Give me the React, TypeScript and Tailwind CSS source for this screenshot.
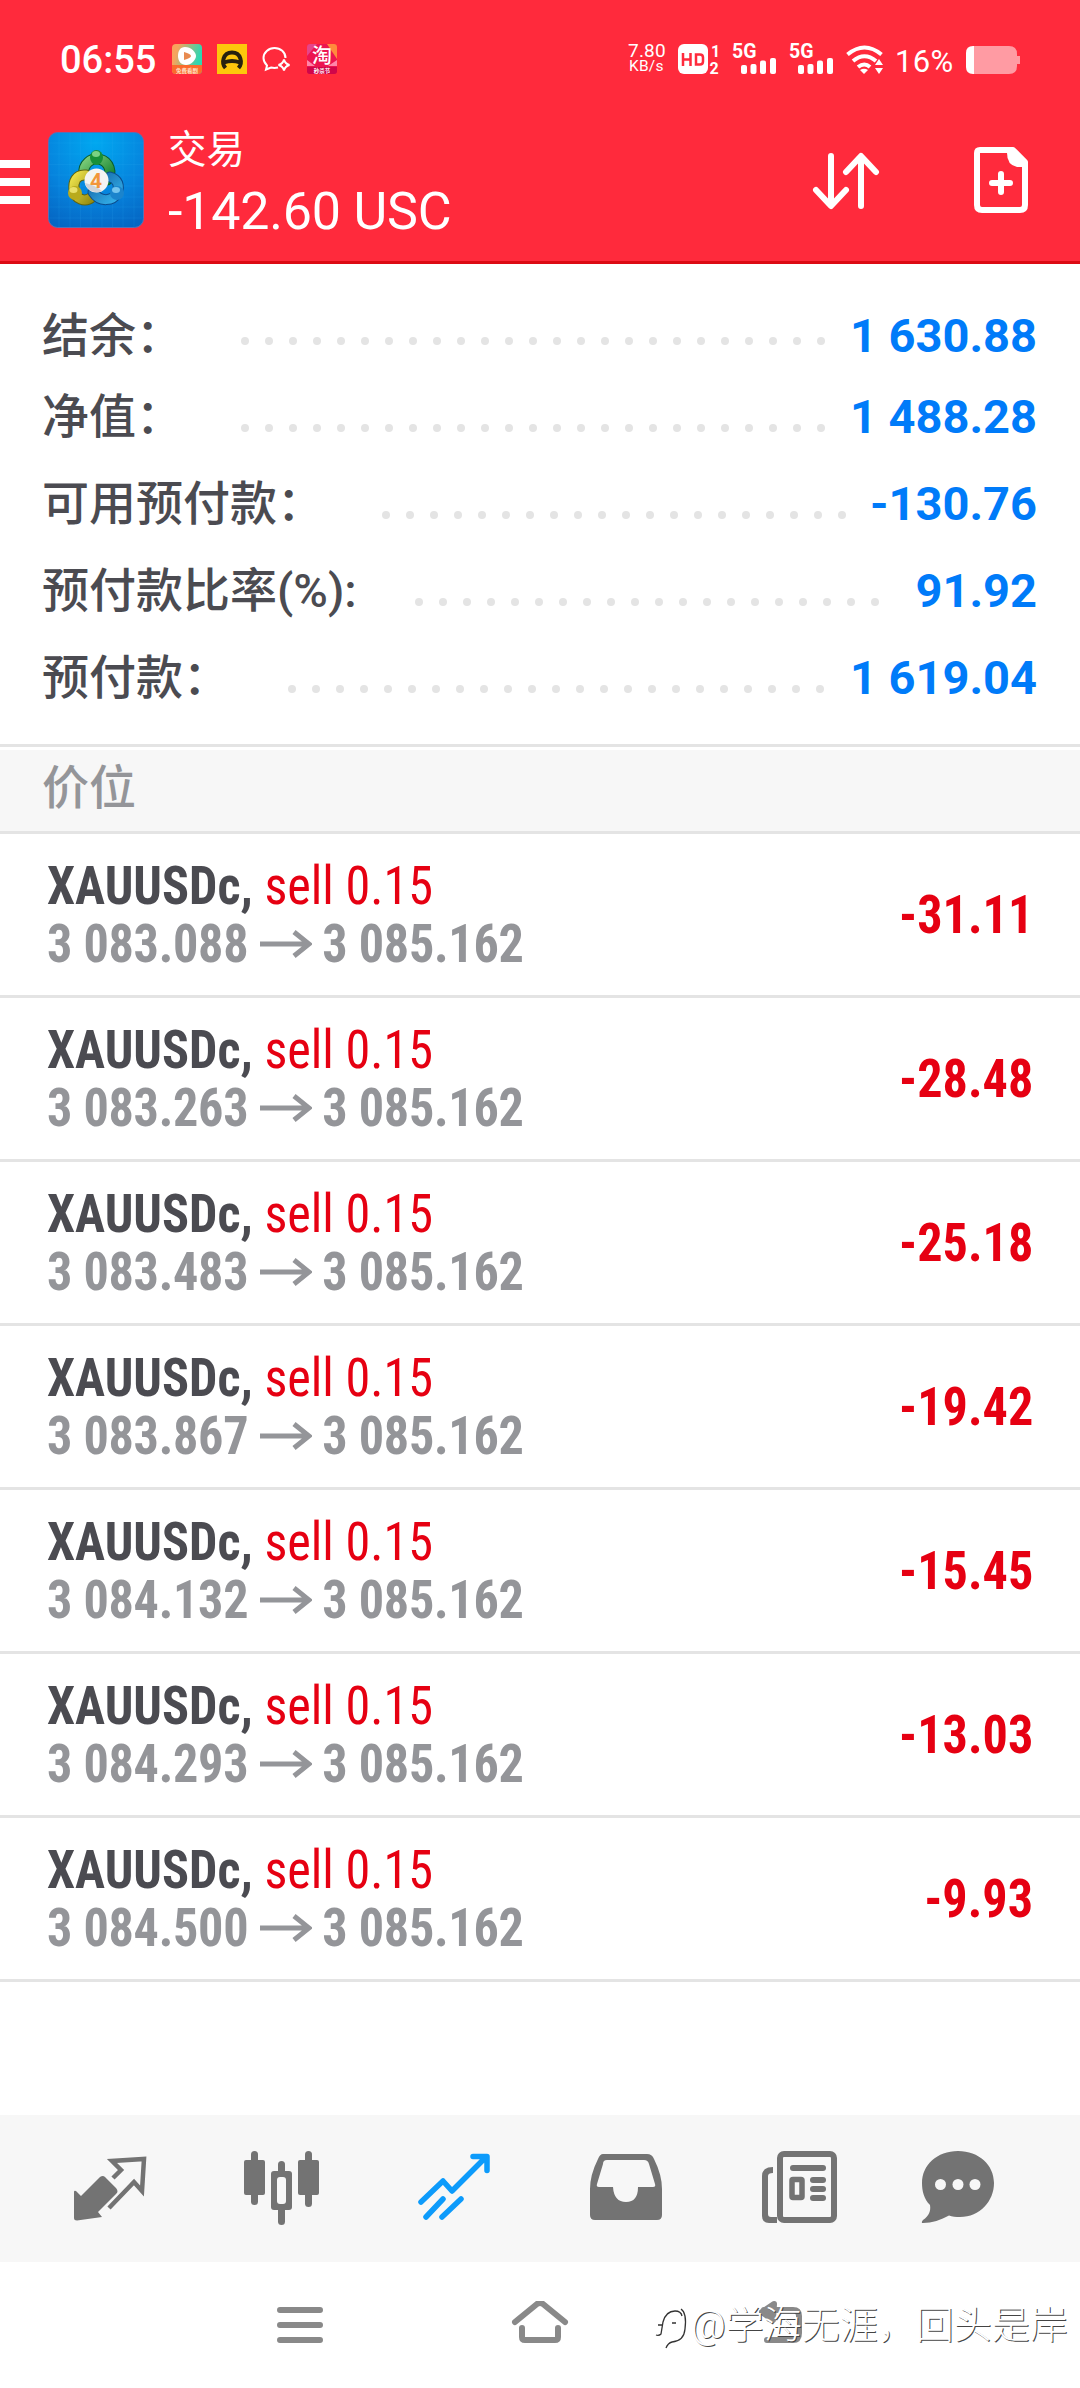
import type { ReactNode } from 'react'

const summary = [
  { label: '结余：', value: '1 630.88', dots: 25, inset: 'pr-[255px]', text: 'pt-[15px]' },
  { label: '净值：', value: '1 488.28', dots: 25, inset: 'pr-[255px]', text: 'pt-[9px]' },
  { label: '可用预付款：', value: '-130.76', dots: 20, inset: 'pr-[234px]', text: 'pt-[9px]' },
  { label: '预付款比率(%):', value: '91.92', dots: 20, inset: 'pr-[201px]', text: 'pt-[9px]' },
  { label: '预付款：', value: '1 619.04', dots: 23, inset: 'pr-[256px]', text: 'pt-[9px]' },
]

const positions = [
  { open: '3 083.088', profit: '-31.11' },
  { open: '3 083.263', profit: '-28.48' },
  { open: '3 083.483', profit: '-25.18' },
  { open: '3 083.867', profit: '-19.42' },
  { open: '3 084.132', profit: '-15.45' },
  { open: '3 084.293', profit: '-13.03' },
  { open: '3 084.500', profit: '-9.93' },
]

function Signal() {
  return (
    <div className="relative h-[30px] w-[45px] shrink-0">
      <span className="absolute left-0 top-0 text-[19.500px] font-bold leading-[16px]">5G</span>
      <svg className="absolute inset-0" width="45" height="30" fill="#fff">
        <rect x="9" y="21" width="6" height="9" rx="2" />
        <rect x="18.500" y="20" width="6" height="10" rx="2" />
        <rect x="28" y="16.500" width="6" height="13.500" rx="2" />
        <rect x="38" y="14" width="6" height="16" rx="2" />
      </svg>
    </div>
  )
}

function StatusBar() {
  return (
    <div className="flex h-[74px] items-end pl-[60px] text-white">
      <span className="w-[112px] text-[38px] font-medium leading-[28px]">06:55</span>
      <div className="flex gap-[15px]">
        <svg width="30" height="30" viewBox="0 0 30 30">
          <defs>
            <linearGradient id="video" x1="0" y1="0" x2="1" y2="0.300">
              <stop offset="0.200" stopColor="#f8a35c" />
              <stop offset="0.950" stopColor="#2fd6b0" />
            </linearGradient>
          </defs>
          <rect width="30" height="30" rx="4" fill="url(#video)" />
          <path d="M0 21h30v5a4 4 0 0 1-4 4H4a4 4 0 0 1-4-4z" fill="#fb6a2c" />
          <path d="M13 3c6 0 11 5 11 9s-5 9-10 9-8-4-8-9 2-9 7-9z" fill="#fff" />
          <path d="M12 8q7 2 7 4t-7 4z" fill="#e88a50" />
          <text x="15" y="28.500" textAnchor="middle" fontSize="5.500" fontWeight="700" fill="#ffe0c8">免费看剧</text>
        </svg>
        <svg width="30" height="30" viewBox="0 0 30 30">
          <rect width="30" height="30" fill="#fdc70c" />
          <path d="M8.500 24C4 19 6 8.500 15 8.500S26 19 21.500 24M7 18.500c5-2 11-2 16 0" fill="none" stroke="#26220f" strokeWidth="4" />
        </svg>
        <svg width="30" height="30" viewBox="0 0 30 30" fill="none" stroke="#fff" strokeWidth="2">
          <path d="M23.500 14c0-6-5-10-11-10S1.500 8.500 1.500 14c0 3.500 1.500 5.500 3.500 7.500L4 25.500l5-2c3 .8 5 .5 7 0" />
          <path d="M22 15.500c.8 3.500 2 4.700 5.500 5.500-3.500.8-4.700 2-5.500 5.500-.8-3.500-2-4.700-5.500-5.500 3.500-.8 4.700-2 5.500-5.500z" />
        </svg>
        <svg width="30" height="30" viewBox="0 0 30 30">
          <rect width="30" height="30" rx="3" fill="#ec1550" />
          <path d="M0 3q0-3 3-3h7L0 12z" fill="#e6448a" />
          <path d="M20 0h7q3 0 3 3v12z" fill="#ff8a3c" />
          <path d="M0 16l8 6H0zM30 16l-9 6h9z" fill="#ff86a8" />
          <text x="15" y="18.500" textAnchor="middle" fontSize="20" fontWeight="500" fill="#fff">淘</text>
          <path d="M0 23h30v4a3 3 0 0 1-3 3H3a3 3 0 0 1-3-3z" fill="#d0064a" />
          <text x="15" y="28.800" textAnchor="middle" fontSize="5.500" fontWeight="700" fill="#fff">秒杀节</text>
        </svg>
      </div>
      <div className="ml-[291px] flex h-[32px] w-[50px] flex-col">
        <span className="text-[19px] leading-[17px] tracking-[0.2px]">7.80</span>
        <span className="pl-px text-[15.500px] leading-[15px] tracking-[0.2px]">KB/s</span>
      </div>
      <svg className="mr-[11px] overflow-visible" width="43" height="30" viewBox="0 0 43 30" fill="#fff">
        <rect width="30" height="30" rx="6" />
        <path d="M5 9v13M12.500 9v13M5 15.500h7.500M18 10.500h4q3 0 3 3v4q0 3-3 3h-4z" fill="none" stroke="#ff2a3c" strokeWidth="2.500" />
        <text x="33" y="12.500" fontSize="16" fontWeight="700">1</text>
        <text x="31.500" y="29.500" fontSize="16" fontWeight="700">2</text>
      </svg>
      <Signal />
      <div className="w-3" />
      <Signal />
      <svg className="ml-3" width="38" height="30" viewBox="0 0 38 30" fill="none" stroke="#fff" strokeWidth="4">
        <path d="M1.500 10.500q17-14 34 0M7 17q11.500-9.500 23 0M12 23q6.500-5 12 0" />
        <path d="M18 30l-4-4q4-2.500 8 0zM33 15l4 6h-8zM33 30l4-6h-8z" fill="#fff" stroke="none" />
      </svg>
      <span className="ml-[11px] w-[71px] text-[31px] leading-[25px] tracking-[0.3px]">16%</span>
      <svg width="55" height="28" viewBox="0 0 55 28">
        <path d="M7 0h36q8 0 8 8v2h3v8h-3v2q0 8-8 8H7z" fill="#ff9ba3" />
        <path d="M8 0v28H7q-7 0-7-7V7q0-7 7-7z" fill="#fff" />
      </svg>
    </div>
  )
}

function AppLogo() {
  return (
    <svg width="96" height="96" viewBox="0 0 96 96">
      <defs>
        <radialGradient id="sky" cx="0.500" cy="0.100" r="0.950">
          <stop offset="0" stopColor="#00a8f0" />
          <stop offset="0.600" stopColor="#0683dd" />
          <stop offset="1" stopColor="#0567c4" />
        </radialGradient>
        <linearGradient id="green" x1="0" y1="0" x2="1" y2="1">
          <stop offset="0" stopColor="#7fce7a" />
          <stop offset="1" stopColor="#0f7f2c" />
        </linearGradient>
        <linearGradient id="yellow" x1="0" y1="0" x2="1" y2="1">
          <stop offset="0" stopColor="#ebe04a" />
          <stop offset="1" stopColor="#978d12" />
        </linearGradient>
        <linearGradient id="blue" x1="0" y1="0" x2="1" y2="1">
          <stop offset="0" stopColor="#1467a8" />
          <stop offset="1" stopColor="#34b0ea" />
        </linearGradient>
      </defs>
      <rect x="0.500" y="0.500" width="95" height="95" rx="9" fill="url(#sky)" stroke="#5a6fb4" />
      <path
        d="M11 1v94M22 1v94M32.500 1v94M43 1v94M54 1v94M64.500 1v94M75 1v94M86 1v94M1 11h94M1 22h94M1 32.500h94M1 43h94M1 54h94M1 65h94M1 75h94M1 86h94"
        stroke="#3db2f5"
        strokeOpacity="0.120"
      />
      <g fill="none" strokeLinecap="round">
        <path d="M36 42a13 13 0 1 1 23 6" stroke="#0a5c2c" strokeWidth="11" />
        <path d="M36 42a13 13 0 1 1 23 6" stroke="url(#green)" strokeWidth="9" />
        <path d="M38 43c-10-1-13 7-12 15 1 9 11 13 18 7" stroke="#5f6410" strokeWidth="11" />
        <path d="M38 43c-10-1-13 7-12 15 1 9 11 13 18 7" stroke="url(#yellow)" strokeWidth="9" />
        <path d="M62 45c8 2 10 9 7 16-4 8-17 10-24-1" stroke="#0b4c8c" strokeWidth="11" />
        <path d="M62 45c8 2 10 9 7 16-4 8-17 10-24-1" stroke="url(#blue)" strokeWidth="9" />
      </g>
      <ellipse cx="48.500" cy="25.500" rx="6.500" ry="7.500" fill="#179037" />
      <ellipse cx="48" cy="22" rx="4" ry="3" fill="#7ad283" />
      <ellipse cx="27" cy="61" rx="7" ry="7" fill="#b9ab1c" />
      <ellipse cx="25.500" cy="58" rx="4" ry="3" fill="#e9e06a" />
      <ellipse cx="69" cy="61" rx="7" ry="7" fill="#1b84cc" />
      <ellipse cx="68" cy="58" rx="4" ry="3" fill="#74c4ee" />
      <circle cx="48.500" cy="48.500" r="12" fill="#f4f4f2" />
      <path d="M37 51q10 2 17 8a12 12 0 0 1-17-8z" fill="#cfd3d8" />
      <text x="48" y="55.500" textAnchor="middle" fontSize="21" fontWeight="700" fill="#f2963a">4</text>
    </svg>
  )
}

function Header() {
  return (
    <header className="h-[264px] border-b-[3px] border-[#dc0a14] bg-[#ff2a3c]">
      <StatusBar />
      <div className="flex pt-[52px] text-white">
        <div className="mt-[34px] flex w-[30px] flex-col gap-[10px]">
          <div className="h-2 bg-white" />
          <div className="h-2 bg-white" />
          <div className="h-2 bg-white" />
        </div>
        <div className="ml-[18px] mt-[6px]">
          <AppLogo />
        </div>
        <div className="ml-[24px] flex w-[400px] flex-col pt-[2px]">
          <h1 className="text-[38.500px] leading-[44px]">交易</h1>
          <span className="mt-[10px] whitespace-nowrap text-[52px] leading-[60px] tracking-[-0.2px]">-142.60 USC</span>
        </div>
        <div className="ml-[241px] mt-[21px] flex items-start gap-[93px]">
          <svg className="mt-[5px]" width="72" height="60" viewBox="0 0 72 60" fill="none" stroke="#fff" strokeWidth="6" strokeLinecap="round" strokeLinejoin="round">
            <path d="M22 4v49M7 38l15 16 15-16M52 54V5M37 20L52 4l15 16" />
          </svg>
          <svg width="54" height="66" viewBox="0 0 54 66" fill="none" stroke="#fff">
            <path d="M6 3h33l12 12v43q0 5-5 5H8q-5 0-5-5V6q0-3 3-3z" strokeWidth="6" strokeLinejoin="round" />
            <path d="M33 3h7l12 12v5h-9q-10-2-10-14z" fill="#fff" stroke="none" />
            <path d="M27 27v18M18 36h18" strokeWidth="6" strokeLinecap="round" />
          </svg>
        </div>
      </div>
    </header>
  )
}

function Dots({ count }: { count: number }) {
  return (
    <div className="flex gap-4">
      {Array.from({ length: count }, (_, i) => (
        <i key={i} className="size-2 rounded-full bg-[#e4e4e4]" />
      ))}
    </div>
  )
}

function Summary() {
  return (
    <section className="h-[480px] pt-[27px]">
      {summary.map((row) => (
        <div key={row.label} className="grid h-[87px] grid-cols-1 grid-rows-1">
          <div className={`col-start-1 row-start-1 flex justify-end pt-[46px] ${row.inset}`}>
            <Dots count={row.dots} />
          </div>
          <div className={`col-start-1 row-start-1 flex justify-between pl-[42px] pr-[43px] text-[47px] leading-[60px] ${row.text}`}>
            <span className="font-medium text-[#4b4b51]">{row.label}</span>
            <span className="font-bold text-[#007bf9]">{row.value}</span>
          </div>
        </div>
      ))}
    </section>
  )
}

function Position({ open, profit }: { open: string; profit: string }) {
  return (
    <div className="flex h-[164px] items-center justify-between whitespace-nowrap border-b-[3px] border-[#e4e4e4] px-[47px] font-['Roboto_Condensed','Roboto'] text-[54px] leading-[58px] [font-stretch:75%]">
      <div className="flex origin-left scale-x-[0.93] flex-col">
        <div>
          <b className="text-[#4b4b51]">XAUUSDc,</b> <span className="text-[#e60012]">sell 0.15</span>
        </div>
        <div className="flex items-center font-bold tracking-[-0.3px] text-[#949599]">
          <span className="w-[229px]">{open}</span>
          <svg className="mr-[11px]" width="56" height="28" viewBox="0 0 52 28" preserveAspectRatio="none" fill="none" stroke="#949599" strokeWidth="5">
            <path d="M0 14h48M34 2l15 12-15 12" />
          </svg>
          <span>3 085.162</span>
        </div>
      </div>
      <span className="origin-right scale-x-[0.93] font-bold text-[#e60012]">{profit}</span>
    </div>
  )
}

function TabIcon({ children, active }: { children: ReactNode; active?: boolean }) {
  return (
    <svg
      className={active ? 'text-[#0d9bfb]' : 'text-[#737373]'}
      width="96"
      height="84"
      viewBox="0 0 96 84"
      fill="currentColor"
    >
      {children}
    </svg>
  )
}

function TabBar() {
  return (
    <nav className="flex h-[147px] items-start gap-[76px] bg-[#f7f7f7] pl-[60px] pt-[31px]">
      <TabIcon>
        <path d="M14 46v26q0 2.500 3 2.500L42 71l-4-5 18-18q3-2.500 0-6L45 31q-2-2-5 0L21 50l-5-5q-2-1-2 1z" />
        <path
          d="M53 32l8-8-9-9 32-2-2 32-8-9-25 26"
          fill="none"
          stroke="currentColor"
          strokeWidth="4.500"
        />
      </TabIcon>
      <TabIcon>
        <rect x="12" y="14" width="21" height="35" rx="2" />
        <rect x="19" y="5" width="7" height="54" rx="3.500" />
        <rect x="66" y="14" width="21" height="35" rx="2" />
        <rect x="73" y="5" width="7" height="56" rx="3.500" />
        <rect x="46" y="15" width="7" height="64" rx="3.500" />
        <rect x="39" y="25" width="21" height="39" rx="3" />
        <rect x="45" y="31" width="9" height="27" rx="3" fill="#f7f7f7" />
      </TabIcon>
      <TabIcon active>
        <path
          d="M17 56l22-21 9 10 34-34M69 10.500h14v14M22 71l17-18M38 71l19-18"
          fill="none"
          stroke="currentColor"
          strokeWidth="5.500"
          strokeLinecap="round"
          strokeLinejoin="round"
        />
      </TabIcon>
      <TabIcon>
        <path d="M27 8h44q5 0 7 5 8 16 8 30v26q0 5-5 5H19q-5 0-5-5V43q0-14 8-30 2-5 5-5z" />
        <path d="M28 14h40q4 0 5 4l6 20q1 3-2 3H62q0 15-12 15T37 41H23q-3 0-2-3l6-20q0-4 4-4z" fill="#f7f7f7" />
      </TabIcon>
      <TabIcon>
        <path d="M29 77h-8q-7 0-7-7V30q0-9 11-9v6q-5 0-5 3v38q0 3 3 3h6z" />
        <rect x="32" y="8" width="54" height="66" rx="4" fill="none" stroke="currentColor" strokeWidth="6" />
        <rect x="42" y="19" width="36" height="6" rx="3" />
        <rect x="44" y="33.500" width="10" height="18" fill="none" stroke="currentColor" strokeWidth="5.500" rx="1" />
        <rect x="62" y="31" width="16" height="6" rx="3" />
        <rect x="62" y="40" width="16" height="6" rx="3" />
        <rect x="62" y="49" width="16" height="6" rx="3" />
      </TabIcon>
      <TabIcon>
        <path d="M38 5c21 0 36 14 36 32S60 71 40 71c-4 0-8-.5-11-1.500C21 74 12 77 3 77c-2 0-1-2 0-3 6-4 8-9 7-15C4 53 2 45 2 37 2 19 17 5 38 5z" />
        <g fill="#f7f7f7">
          <circle cx="20.500" cy="38.500" r="5.500" />
          <circle cx="38" cy="38.500" r="5.500" />
          <circle cx="55" cy="38.500" r="5.500" />
        </g>
      </TabIcon>
    </nav>
  )
}

function SystemNav() {
  return (
    <div className="relative h-[126px] bg-white">
      <div className="flex items-start pl-[277px] pt-[39px]">
        <svg width="46" height="42" viewBox="0 0 46 42" stroke="#898989" strokeWidth="6" strokeLinecap="round">
          <path d="M3 9h40M3 24h40M3 39h40" />
        </svg>
        <svg className="ml-[187px]" width="60" height="48" viewBox="0 0 60 48" fill="none" stroke="#898989" strokeWidth="6" strokeLinecap="round" strokeLinejoin="round">
          <path d="M5 21L27 3q3-2 6 0l22 18M12 27v9q0 3 3 3h30q3 0 3-3v-9" />
        </svg>
        <svg className="ml-[186px]" width="54" height="48" viewBox="0 0 54 48" fill="none" stroke="#898989" strokeWidth="6" strokeLinecap="round" strokeLinejoin="round">
          <path d="M18 3L6 11l11 8z" fill="#898989" />
          <path d="M8 9h29q6 0 6 6v17q0 7-6 7H11" />
        </svg>
      </div>
      {/* author mark over the navigation keys */}
      <div className="absolute left-[654px] top-[37px] flex items-center whitespace-nowrap text-white">
        <svg width="37" height="52" viewBox="0 0 37 52" fill="none" stroke="#333" strokeWidth="1.300">
          <path d="M2 36q3 1 5-1l2-12q3-11 12-11 6 0 7 5M27 10q6 4 4 20-1 12-13 13-4 1-6 6M4 26h5M18 24h4" />
        </svg>
        <span className="text-[38px] font-light leading-[52px] [text-shadow:1px_1px_0_#444]">
          @学海无涯，回头是岸
        </span>
      </div>
    </div>
  )
}

export default function App() {
  return (
    <div className="flex h-[2388px] w-[1080px] flex-col overflow-hidden bg-white font-['Roboto','Noto_Sans_CJK_SC',sans-serif]" lang="zh-CN">
      <Header />
      <Summary />
      <div className="h-[90px] border-y-[3px] border-[#e4e4e4] pt-[3px]">
        <div className="h-[81px] bg-[#f7f7f7] pl-[42px] text-[47px] font-medium leading-[76px] text-[#949599]">价位</div>
      </div>
      <main className="h-[1281px]">
        {positions.map((p) => (
          <Position key={p.open} {...p} />
        ))}
      </main>
      <TabBar />
      <SystemNav />
    </div>
  )
}
